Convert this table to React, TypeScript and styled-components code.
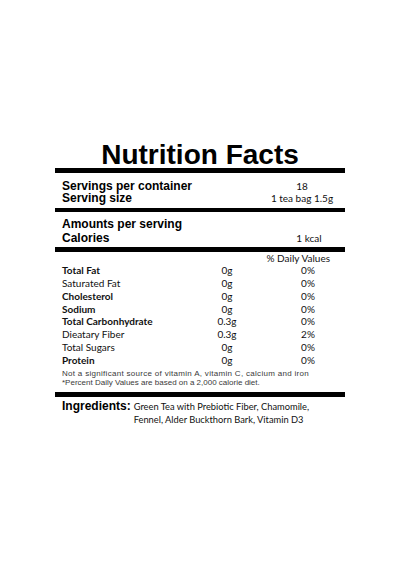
import styled, { createGlobalStyle } from 'styled-components'

const GlobalStyle = createGlobalStyle`
  html, body {
    margin: 0;
    padding: 0;
    background: #fff;
  }
  body {
    font-family: 'Liberation Sans', Arial, sans-serif;
    color: #000;
  }
`

const Page = styled.div`
  width: 400px;
  height: 570px;
  padding-top: 142px;
  box-sizing: border-box;
`

const Label = styled.section`
  width: 290px;
  margin-left: 55px;
`

const Title = styled.h1`
  margin: 0;
  font-family: 'Liberation Sans', Arial, sans-serif;
  font-size: 28px;
  font-weight: 700;
  line-height: 26px;
  text-align: center;
`

const Bar = styled.div<{ $h?: number }>`
  height: ${({ $h }) => $h ?? 5}px;
  background: #000;
`

const Section = styled.div<{ $top: number; $bottom: number }>`
  padding: ${({ $top }) => $top}px 7px ${({ $bottom }) => $bottom}px;
`

const InfoRow = styled.div<{ $lh: number }>`
  display: flex;
  justify-content: space-between;
  align-items: baseline;
  line-height: ${({ $lh }) => $lh}px;
`

const InfoLabel = styled.span`
  font-family: 'Liberation Sans', Arial, sans-serif;
  font-size: 12px;
  font-weight: 700;
`

const InfoValue = styled.span<{ $w: number }>`
  width: ${({ $w }) => $w}px;
  text-align: center;
  font-family: Lato, 'Open Sans', sans-serif;
  font-size: 10px;
  color: #111;
`

const DailyHeader = styled.div`
  padding: 0 15px 0 7px;
  text-align: right;
  font-family: Lato, 'Open Sans', sans-serif;
  font-size: 10px;
  line-height: 12px;
  color: #111;
`

const NutrientGrid = styled.div`
  display: grid;
  grid-template-columns: 1fr 60px 60px;
  column-gap: 21px;
  padding: 0 7px;
  font-family: Lato, 'Open Sans', sans-serif;
  font-size: 10px;
  line-height: 12.85px;
  color: #111;
`

const Cell = styled.span<{ $bold?: boolean; $center?: boolean }>`
  font-weight: ${({ $bold }) => ($bold ? 700 : 400)};
  text-align: ${({ $center }) => ($center ? 'center' : 'left')};
`

const FinePrint = styled.div`
  padding: 2px 7px 5px;
  font-family: 'Liberation Sans', Arial, sans-serif;
  font-size: 8px;
  line-height: 9px;
  color: #3a3a3a;
`

const FineLine = styled.div<{ $spacing?: number }>`
  letter-spacing: ${({ $spacing }) => $spacing ?? 0}px;
  white-space: nowrap;
`

const Ingredients = styled.div`
  display: flex;
  align-items: baseline;
  gap: 3px;
  padding: 3px 7px 0;
  line-height: 13px;
`

const IngredientsLabel = styled.span`
  flex: none;
  font-family: 'Liberation Sans', Arial, sans-serif;
  font-size: 12px;
  font-weight: 700;
`

const IngredientsText = styled.span`
  font-family: Lato, 'Open Sans', sans-serif;
  font-size: 9.3px;
  color: #111;
`

type Nutrient = {
  name: string
  amount: string
  daily: string
  bold?: boolean
}

const nutrients: Nutrient[] = [
  { name: 'Total Fat', amount: '0g', daily: '0%', bold: true },
  { name: 'Saturated Fat', amount: '0g', daily: '0%' },
  { name: 'Cholesterol', amount: '0g', daily: '0%', bold: true },
  { name: 'Sodium', amount: '0g', daily: '0%', bold: true },
  { name: 'Total Carbonhydrate', amount: '0.3g', daily: '0%', bold: true },
  { name: 'Dieatary Fiber', amount: '0.3g', daily: '2%' },
  { name: 'Total Sugars', amount: '0g', daily: '0%' },
  { name: 'Protein', amount: '0g', daily: '0%', bold: true },
]

export default function App(): JSX.Element {
  return (
    <Page>
      <GlobalStyle />
      <Label>
        <Title>Nutrition Facts</Title>
        <Bar />
        <Section $top={6.5} $bottom={3.5}>
          <InfoRow $lh={12.5}>
            <InfoLabel>Servings per container</InfoLabel>
            <InfoValue $w={72}>18</InfoValue>
          </InfoRow>
          <InfoRow $lh={12.5}>
            <InfoLabel>Serving size</InfoLabel>
            <InfoValue $w={72}>1 tea bag 1.5g</InfoValue>
          </InfoRow>
        </Section>
        <Bar $h={4} />
        <Section $top={5} $bottom={2}>
          <InfoRow $lh={14}>
            <InfoLabel>Amounts per serving</InfoLabel>
          </InfoRow>
          <InfoRow $lh={14}>
            <InfoLabel>Calories</InfoLabel>
            <InfoValue $w={58}>1 kcal</InfoValue>
          </InfoRow>
        </Section>
        <Bar />
        <DailyHeader>% Daily Values</DailyHeader>
        <NutrientGrid>
          {nutrients.map((n) => [
            <Cell key={`${n.name}-name`} $bold={n.bold}>
              {n.name}
            </Cell>,
            <Cell key={`${n.name}-amount`} $center>
              {n.amount}
            </Cell>,
            <Cell key={`${n.name}-daily`} $center>
              {n.daily}
            </Cell>,
          ])}
        </NutrientGrid>
        <FinePrint>
          <FineLine $spacing={0.3}>
            Not a significant source of vitamin A, vitamin C, calcium and iron
          </FineLine>
          <FineLine>
            *Percent Daily Values are based on a 2,000 calorie diet.
          </FineLine>
        </FinePrint>
        <Bar />
        <Ingredients>
          <IngredientsLabel>Ingredients:</IngredientsLabel>
          <IngredientsText>
            Green Tea with Prebiotic Fiber, Chamomile,
            <br />
            Fennel, Alder Buckthorn Bark, Vitamin D3
          </IngredientsText>
        </Ingredients>
      </Label>
    </Page>
  )
}
